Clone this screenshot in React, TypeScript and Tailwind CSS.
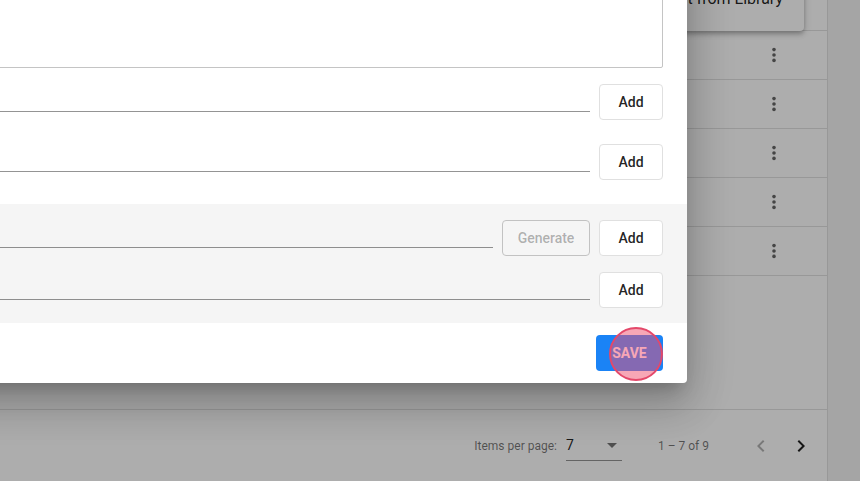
import type { ReactNode } from 'react'

const rowCount = 6

export default function App() {
  return (
    <div className="relative flex h-[481px] w-[860px] overflow-hidden bg-white font-['Roboto',sans-serif] text-[rgba(0,0,0,0.87)]">
      <BackgroundPage />

      {/* import menu, left open behind the dialog */}
      <div className="absolute right-[56px] top-[-81px] rounded-[4px] bg-white py-2 shadow-[0_2px_4px_-1px_rgba(0,0,0,0.2),0_4px_5px_0_rgba(0,0,0,0.14),0_1px_10px_0_rgba(0,0,0,0.12)]">
        <div className="flex h-12 items-center whitespace-nowrap pl-4 pr-[21px] text-base">Create new</div>
        <div className="flex h-12 items-center whitespace-nowrap pl-4 pr-[21px] text-base">Import from Library</div>
      </div>

      <div className="absolute inset-0 bg-[rgba(0,0,0,0.32)]" />

      <EditDialog />

      {/* click marker */}
      <div className="pointer-events-none absolute left-[609px] top-[327px] size-[54px] rounded-full border-2 border-[#e4486a] bg-[rgba(240,80,110,0.5)]" />
    </div>
  )
}

function BackgroundPage() {
  return (
    <>
      <div className="flex w-[828px] shrink-0 flex-col border-r border-[#e0e0e0]">
        <div className="mt-[-18px] flex flex-col">
          {Array.from({ length: rowCount }, (_, index) => (
            <div
              className="flex h-[49px] items-center justify-end border-b border-[#e0e0e0] pr-[41px]"
              key={index}
            >
              <MoreVertIcon />
            </div>
          ))}
        </div>
        <div className="flex-1" />
        <Paginator />
      </div>
      <div className="flex-1 bg-[#f3f3f3]" />
    </>
  )
}

function Paginator() {
  return (
    <div className="flex h-[72px] shrink-0 items-center justify-end border-t border-[#e0e0e0] pr-[6px] text-xs text-[rgba(0,0,0,0.54)]">
      <span>Items per page:</span>
      <div className="ml-[9px] flex h-[30px] w-[56px] items-center justify-between border-b border-[rgba(0,0,0,0.42)] pr-[5px] text-sm text-[rgba(0,0,0,0.87)]">
        <span>7</span>
        <svg
          className="h-[5px] w-[10px] text-[rgba(0,0,0,0.54)]"
          fill="currentColor"
          viewBox="0 0 10 5"
        >
          <path d="M0 0l5 5 5-5z" />
        </svg>
      </div>
      <span className="ml-9 mr-8">1 – 7 of 9</span>
      <IconButton>
        <svg
          className="size-6 text-[rgba(0,0,0,0.3)]"
          fill="currentColor"
          viewBox="0 0 24 24"
        >
          <path d="M15.41 7.41L14 6l-6 6 6 6 1.41-1.41L10.83 12z" />
        </svg>
      </IconButton>
      <IconButton>
        <svg
          className="size-6 text-[rgba(0,0,0,0.87)]"
          fill="currentColor"
          viewBox="0 0 24 24"
        >
          <path d="M10 6L8.59 7.41 13.17 12l-4.58 4.59L10 18l6-6z" />
        </svg>
      </IconButton>
    </div>
  )
}

function IconButton({ children }: { children: ReactNode }) {
  return <div className="flex size-10 items-center justify-center">{children}</div>
}

function MoreVertIcon() {
  return (
    <svg
      className="size-6 text-[rgba(0,0,0,0.6)]"
      fill="currentColor"
      viewBox="0 0 24 24"
    >
      <circle cx="12" cy="6.6" r="1.8" />
      <circle cx="12" cy="12" r="1.8" />
      <circle cx="12" cy="17.4" r="1.8" />
    </svg>
  )
}

function EditDialog() {
  return (
    <div className="absolute bottom-[98px] left-[-320px] right-[173px] top-[-120px] flex flex-col justify-end rounded-[4px] bg-white shadow-[0_11px_15px_-7px_rgba(0,0,0,0.2),0_24px_38px_3px_rgba(0,0,0,0.14),0_9px_46px_8px_rgba(0,0,0,0.12)]">
      <div className="flex flex-col px-6">
        <div className="h-[140px] rounded-[2px] border border-[#c4c4c4]" />
        <FieldRow className="mt-4" />
        <FieldRow className="mt-6" />
      </div>

      <div className="mt-6 flex flex-col gap-4 bg-[#f5f5f5] px-6 pb-[15px] pt-4">
        <div className="flex items-start gap-[9px]">
          <div className="h-[28px] flex-1 border-b border-[rgba(0,0,0,0.42)]" />
          <button
            className="h-9 w-[88px] cursor-default rounded-[4px] border border-[#c2c2c2] text-sm font-medium text-[rgba(0,0,0,0.3)]"
            type="button"
          >
            Generate
          </button>
          <AddButton />
        </div>
        <FieldRow />
      </div>

      <div className="flex justify-end px-6 pb-3 pt-3">
        <button
          className="h-9 w-[67px] rounded-[4px] bg-[#1a83f6] text-sm font-bold text-white"
          type="button"
        >
          SAVE
        </button>
      </div>
    </div>
  )
}

function FieldRow({ className = '' }: { className?: string }) {
  return (
    <div className={['flex items-start gap-[9px]', className].join(' ')}>
      <div className="h-[28px] flex-1 border-b border-[rgba(0,0,0,0.42)]" />
      <AddButton />
    </div>
  )
}

function AddButton() {
  return (
    <button
      className="h-9 w-16 rounded-[4px] border border-[#e0e0e0] bg-white text-sm font-medium text-[rgba(0,0,0,0.87)]"
      type="button"
    >
      Add
    </button>
  )
}
